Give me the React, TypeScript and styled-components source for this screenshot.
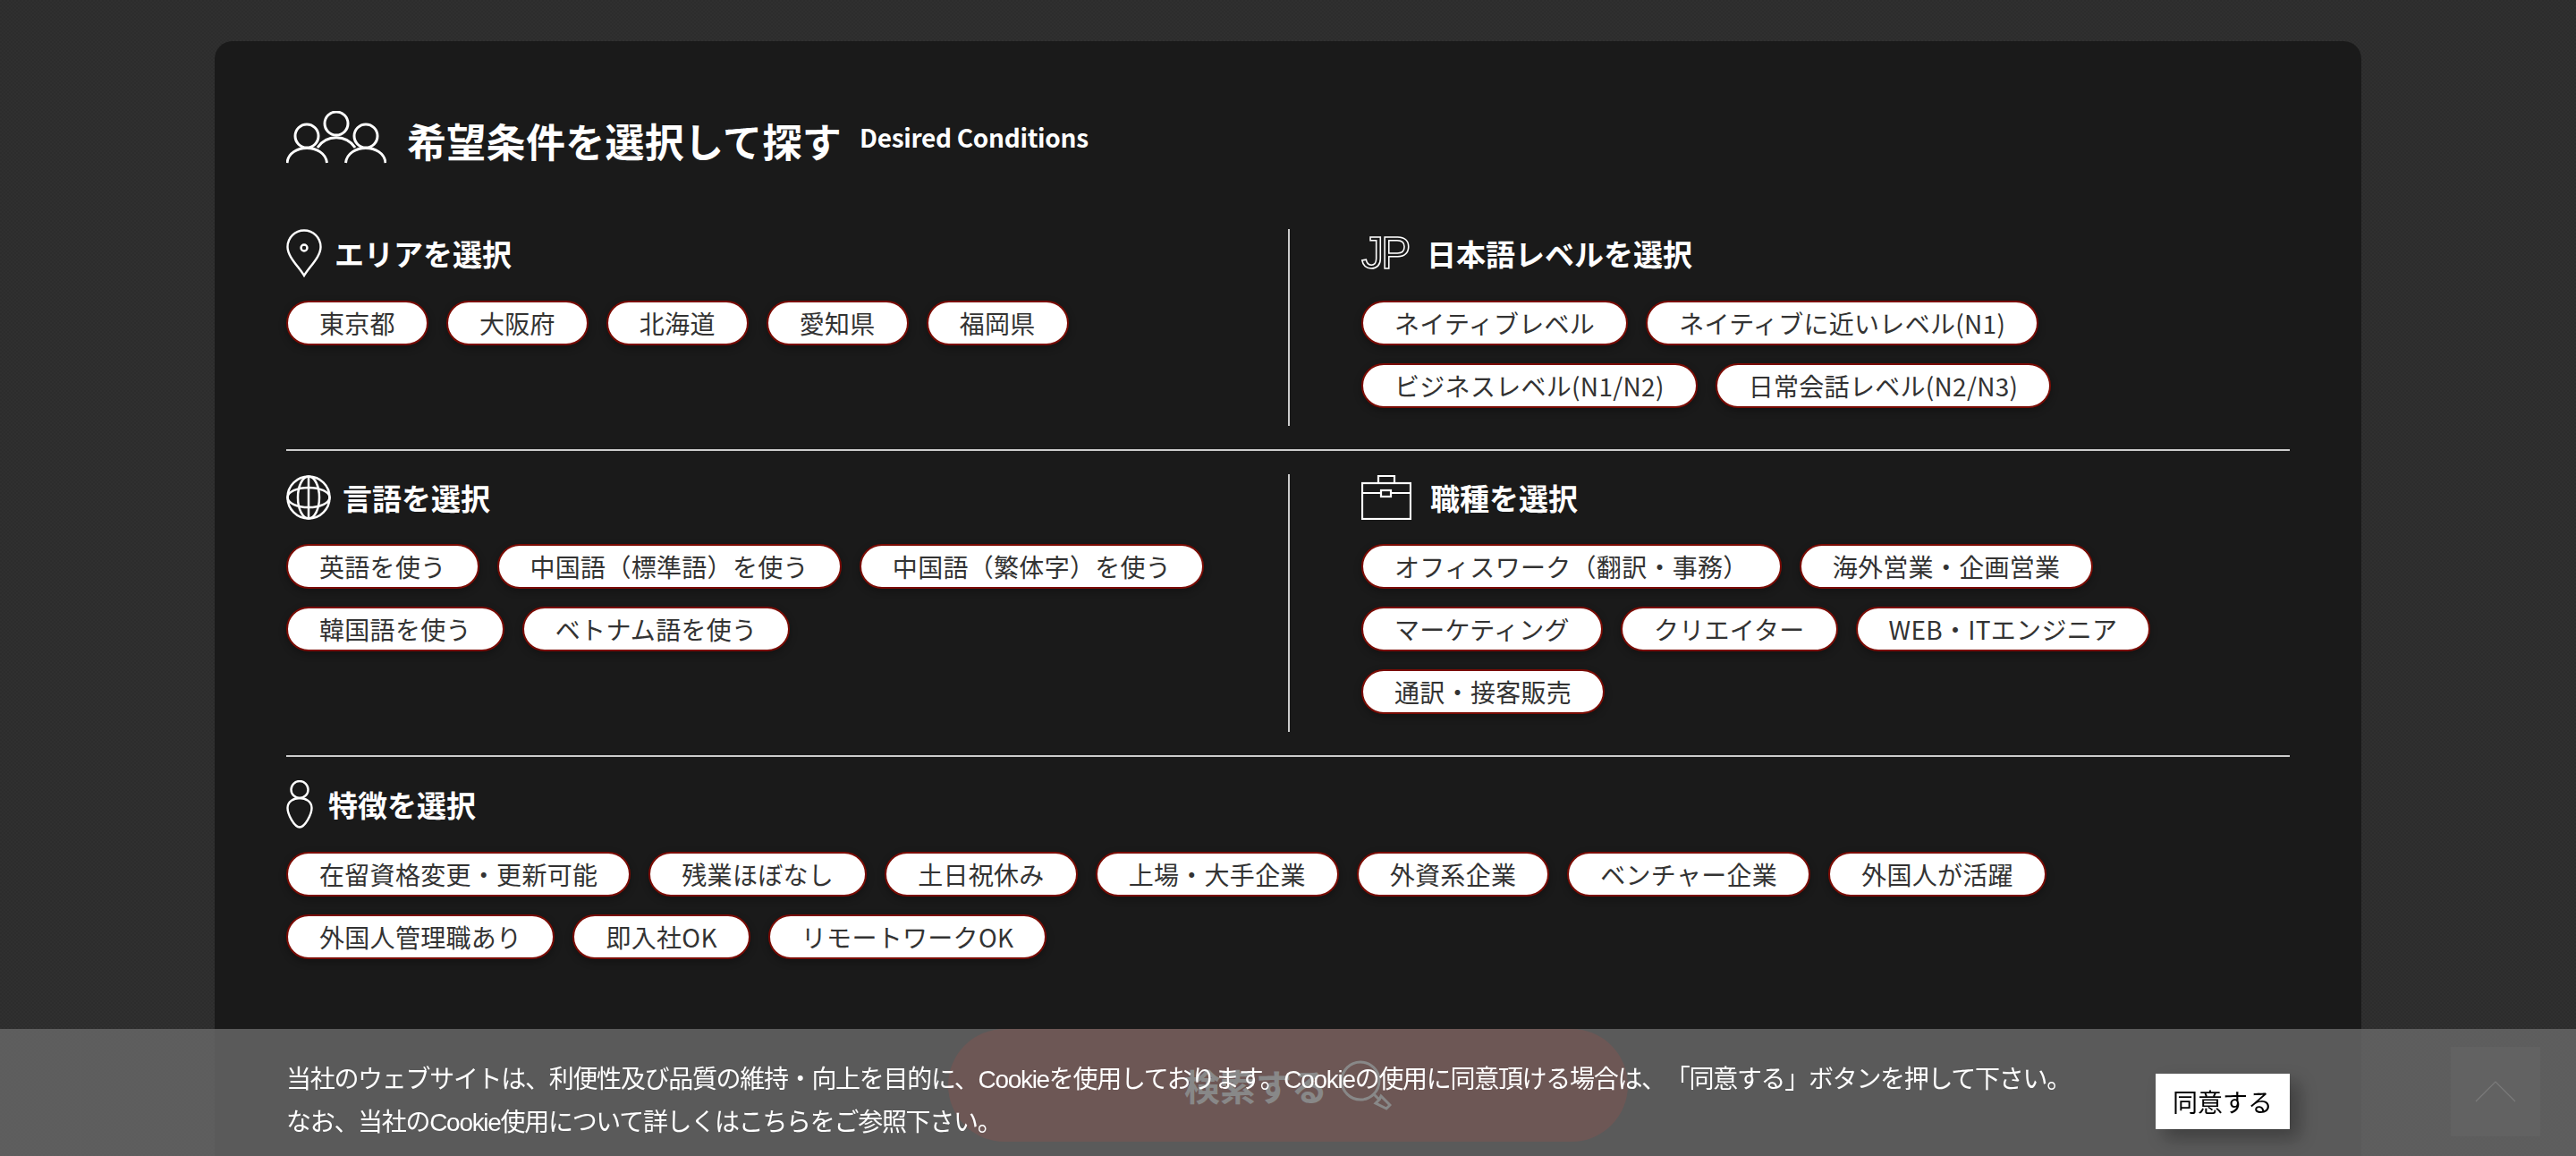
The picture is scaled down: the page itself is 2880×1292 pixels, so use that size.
import React from "react";
import styled, { createGlobalStyle } from "styled-components";

const GlobalStyle = createGlobalStyle`
  html, body {
    margin: 0;
    height: 100%;
    overflow: hidden;
    font-family: "Noto Sans CJK JP", "Noto Sans", sans-serif;
    text-spacing-trim: space-all;
  }
`;

const PeopleIcon = () => (
  <svg width="112" height="60" viewBox="0 0 112 60" fill="none" stroke="#fff" strokeWidth="3">
    <circle cx="56" cy="14" r="13" />
    <circle cx="23" cy="28" r="13" />
    <circle cx="89" cy="28" r="13" />
    <path d="M1 58C3 36 43 36 45.5 58" />
    <path d="M66.5 58C69 36 109 36 111 58" />
    <path d="M35 41C45 26 67 26 77 41" />
  </svg>
);

const PinIcon = () => (
  <svg width="40" height="54" viewBox="0 0 40 54" fill="none" stroke="#fff" strokeWidth="2.4">
    <path d="M20 52C14 42 1.5 31 1.5 20A18.5 18.5 0 0 1 38.5 20C38.5 31 26 42 20 52Z" />
    <circle cx="20" cy="21" r="3.5" />
  </svg>
);

const GlobeIcon = () => (
  <svg width="50" height="50" viewBox="0 0 50 50" fill="none" stroke="#fff" strokeWidth="2.5">
    <circle cx="25" cy="25" r="23.5" />
    <ellipse cx="25" cy="25" rx="12" ry="23.5" />
    <ellipse cx="25" cy="25" rx="23.5" ry="11" />
    <path d="M25 1.5V48.5" />
  </svg>
);

const CaseIcon = () => (
  <svg width="56" height="50" viewBox="0 0 56 50" fill="none" stroke="#fff" strokeWidth="2.2">
    <rect x="1" y="9" width="54" height="40" />
    <path d="M19 9V1H37V9" />
    <path d="M1 20H22M33 20H55" />
    <rect x="22" y="17" width="11" height="7" />
  </svg>
);

const PersonIcon = () => (
  <svg width="30" height="54" viewBox="0 0 30 54" fill="none" stroke="#fff" strokeWidth="2.4">
    <circle cx="15" cy="10.5" r="9.5" />
    <path d="M15 52.5C9 52.5 1.5 38 1.5 31C1.5 24 8 20 15 20C22 20 28.5 24 28.5 31C28.5 38 21 52.5 15 52.5Z" />
  </svg>
);

const SearchIcon = () => (
  <svg width="58" height="56" viewBox="0 0 58 56" fill="none" stroke="#fff" strokeWidth="3">
    <circle cx="23" cy="23" r="21" />
    <path d="M38 38L44 44L40 48L52 54L56 50L46 40L44 44" />
  </svg>
);

const Page = styled.div`
  box-sizing: border-box;
  height: 100vh;
  padding-top: 46px;
  overflow: hidden;
  background: repeating-conic-gradient(#2c2c2c 0 25%, #303030 0 50%) 0 0 / 4px 4px;
`;

const Card = styled.main`
  box-sizing: border-box;
  width: 2400px;
  min-height: 1400px;
  margin: 0 auto;
  padding: 78px 80px 0;
  background: #1a1a1a;
  border-radius: 20px;
`;

const Title = styled.header`
  display: flex;
  align-items: center;
  gap: 23px;
  height: 60px;
  margin-bottom: 72px;
  color: #fff;
`;

const TitleMain = styled.h2`
  margin: 5px 0 0;
  font-size: 44px;
  line-height: 60px;
  font-weight: 700;
  letter-spacing: 0.3px;
`;

const TitleSub = styled.span`
  margin-left: -3px;
  margin-bottom: 2px;
  font-size: 28px;
  font-weight: 700;
  line-height: 60px;
  letter-spacing: -0.3px;
`;

const Row = styled.div<{ $rule?: boolean }>`
  display: flex;
  padding-bottom: ${(p) => (p.$rule ? "26px" : "0")};
  margin-bottom: ${(p) => (p.$rule ? "26px" : "0")};
  border-bottom: ${(p) => (p.$rule ? "2px solid #ccc" : "none")};
`;

const Column = styled.section<{ $right?: boolean; $wide?: boolean }>`
  box-sizing: border-box;
  width: ${(p) => (p.$wide ? "100%" : "1120px")};
  ${(p) => p.$right && "padding-left: 80px; border-left: 2px solid #ccc;"}
`;

const Heading = styled.div<{ $gap: number }>`
  display: flex;
  align-items: center;
  gap: ${(p) => p.$gap}px;
  margin-bottom: 26px;
  color: #fff;
`;

const HeadingText = styled.h3`
  margin: 0;
  font-size: 33px;
  line-height: 52px;
  font-weight: 700;
`;

const JpMark = styled.span`
  display: block;
  width: 56px;
  font-family: "Liberation Sans", sans-serif;
  font-size: 50px;
  line-height: 54px;
  letter-spacing: -3px;
  color: transparent;
  -webkit-text-stroke: 1.5px #fff;
`;

const ChipList = styled.div`
  display: flex;
  flex-wrap: wrap;
`;

const Chip = styled.a`
  box-sizing: border-box;
  height: 50px;
  margin: 0 20px 20px 0;
  padding: 0 35px;
  display: flex;
  align-items: center;
  background: #fff;
  border: 2px solid #7a0c04;
  border-radius: 25px;
  box-shadow: 0 3px 8px rgba(0, 0, 0, 0.3);
  color: #333;
  font-size: 28px;
  letter-spacing: 0.3px;
  white-space: nowrap;
`;

const SearchButton = styled.button`
  display: flex;
  align-items: center;
  justify-content: center;
  gap: 14px;
  width: 760px;
  height: 126px;
  margin: 58px auto 0;
  background: #790b01;
  border: 0;
  border-radius: 63px;
  color: #fff;
  font-family: inherit;
  font-size: 40px;
  font-weight: 700;
`;

const TopButton = styled.a`
  position: fixed;
  right: 40px;
  bottom: 22px;
  width: 100px;
  height: 100px;
  display: flex;
  align-items: center;
  justify-content: center;
  background: #424242;
`;

const CookieBar = styled.aside`
  position: fixed;
  left: 0;
  right: 0;
  bottom: 0;
  height: 142px;
  box-sizing: border-box;
  padding: 33px 320px 0;
  display: flex;
  justify-content: space-between;
  background: rgba(106, 106, 106, 0.8);
`;

const CookieText = styled.p`
  margin: 0;
  color: #fff;
  font-family: "Liberation Sans", "Noto Sans CJK JP", sans-serif;
  font-size: 28px;
  line-height: 48px;
  letter-spacing: -1.3px;
  white-space: nowrap;
`;

const AgreeButton = styled.button`
  width: 150px;
  height: 62px;
  margin-top: 17px;
  padding: 0;
  background: #fff;
  border: 0;
  box-shadow: 10px 10px 20px rgba(0, 0, 0, 0.3);
  color: #000;
  font-family: "Liberation Sans", "Noto Sans CJK JP", sans-serif;
  font-size: 28px;
`;

const groups = {
  area: ["東京都", "大阪府", "北海道", "愛知県", "福岡県"],
  level: ["ネイティブレベル", "ネイティブに近いレベル(N1)", "ビジネスレベル(N1/N2)", "日常会話レベル(N2/N3)"],
  language: ["英語を使う", "中国語（標準語）を使う", "中国語（繁体字）を使う", "韓国語を使う", "ベトナム語を使う"],
  job: [
    "オフィスワーク（翻訳・事務）",
    "海外営業・企画営業",
    "マーケティング",
    "クリエイター",
    "WEB・ITエンジニア",
    "通訳・接客販売",
  ],
  feature: [
    "在留資格変更・更新可能",
    "残業ほぼなし",
    "土日祝休み",
    "上場・大手企業",
    "外資系企業",
    "ベンチャー企業",
    "外国人が活躍",
    "外国人管理職あり",
    "即入社OK",
    "リモートワークOK",
  ],
};

const Chips = ({ items }: { items: string[] }) => (
  <ChipList>
    {items.map((item) => (
      <Chip key={item}>{item}</Chip>
    ))}
  </ChipList>
);

const App = () => {
  return (
    <Page>
      <GlobalStyle />
      <Card>
        <Title>
          <PeopleIcon />
          <TitleMain>希望条件を選択して探す</TitleMain>
          <TitleSub>Desired Conditions</TitleSub>
        </Title>

        <Row $rule>
          <Column>
            <Heading $gap={14}>
              <PinIcon />
              <HeadingText>エリアを選択</HeadingText>
            </Heading>
            <Chips items={groups.area} />
          </Column>
          <Column $right>
            <Heading $gap={17}>
              <JpMark>JP</JpMark>
              <HeadingText>日本語レベルを選択</HeadingText>
            </Heading>
            <Chips items={groups.level} />
          </Column>
        </Row>

        <Row $rule>
          <Column>
            <Heading $gap={13}>
              <GlobeIcon />
              <HeadingText>言語を選択</HeadingText>
            </Heading>
            <Chips items={groups.language} />
          </Column>
          <Column $right>
            <Heading $gap={21}>
              <CaseIcon />
              <HeadingText>職種を選択</HeadingText>
            </Heading>
            <Chips items={groups.job} />
          </Column>
        </Row>

        <Row>
          <Column $wide>
            <Heading $gap={17}>
              <PersonIcon />
              <HeadingText>特徴を選択</HeadingText>
            </Heading>
            <Chips items={groups.feature} />
          </Column>
        </Row>

        <SearchButton>
          検索する
          <SearchIcon />
        </SearchButton>
      </Card>

      <TopButton>
        <svg width="46" height="24" viewBox="0 0 46 24" fill="none" stroke="#bbb" strokeWidth="1.2">
          <path d="M1 23L23 1L45 23" />
        </svg>
      </TopButton>

      <CookieBar>
        <CookieText>
          当社のウェブサイトは、利便性及び品質の維持・向上を目的に、Cookieを使用しております。Cookieの使用に同意頂ける場合は、「同意する」ボタンを押して下さい。
          <br />
          なお、当社のCookie使用について詳しくはこちらをご参照下さい。
        </CookieText>
        <AgreeButton>同意する</AgreeButton>
      </CookieBar>
    </Page>
  );
};

export default App;
